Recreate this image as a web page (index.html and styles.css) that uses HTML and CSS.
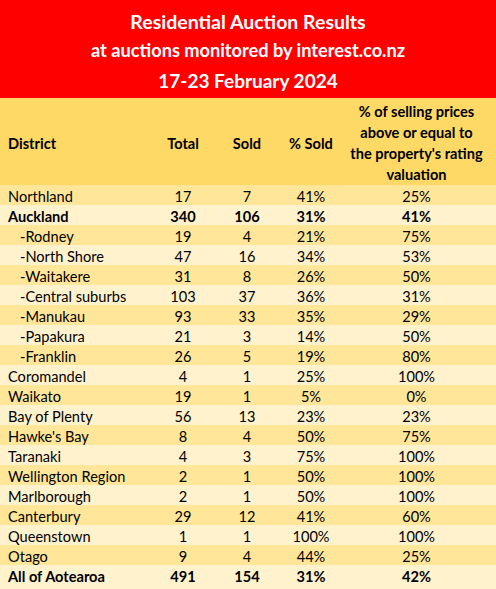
FILE: index.html
```html
<!DOCTYPE html>
<html>
<head>
<meta charset="utf-8">
<link rel="stylesheet" href="styles.css">
</head>
<body>
<div class="sheet">
  <header class="banner">
    <div class="title">Residential Auction Results</div>
    <div class="subtitle">at auctions monitored by interest.co.nz</div>
    <div class="date">17-23 February 2024</div>
  </header>
  <table class="results">
    <colgroup>
      <col class="c-district"><col class="c-num"><col class="c-num"><col class="c-num"><col class="c-val">
    </colgroup>
    <thead>
      <tr>
        <th class="left">District</th>
        <th>Total</th>
        <th>Sold</th>
        <th>% Sold</th>
        <th class="val"><span class="ln">% of selling prices</span><span class="ln">above or equal to</span><span class="ln">the property's rating</span><span class="ln">valuation</span></th>
      </tr>
    </thead>
    <tbody>
      <tr><td class="left">Northland</td><td>17</td><td>7</td><td>41%</td><td class="val">25%</td></tr>
      <tr class="bold"><td class="left">Auckland</td><td>340</td><td>106</td><td>31%</td><td class="val">41%</td></tr>
      <tr><td class="left sub">-Rodney</td><td>19</td><td>4</td><td>21%</td><td class="val">75%</td></tr>
      <tr><td class="left sub">-North Shore</td><td>47</td><td>16</td><td>34%</td><td class="val">53%</td></tr>
      <tr><td class="left sub">-Waitakere</td><td>31</td><td>8</td><td>26%</td><td class="val">50%</td></tr>
      <tr><td class="left sub">-Central suburbs</td><td>103</td><td>37</td><td>36%</td><td class="val">31%</td></tr>
      <tr><td class="left sub">-Manukau</td><td>93</td><td>33</td><td>35%</td><td class="val">29%</td></tr>
      <tr><td class="left sub">-Papakura</td><td>21</td><td>3</td><td>14%</td><td class="val">50%</td></tr>
      <tr><td class="left sub">-Franklin</td><td>26</td><td>5</td><td>19%</td><td class="val">80%</td></tr>
      <tr><td class="left">Coromandel</td><td>4</td><td>1</td><td>25%</td><td class="val">100%</td></tr>
      <tr><td class="left">Waikato</td><td>19</td><td>1</td><td>5%</td><td class="val">0%</td></tr>
      <tr><td class="left">Bay of Plenty</td><td>56</td><td>13</td><td>23%</td><td class="val">23%</td></tr>
      <tr><td class="left">Hawke's Bay</td><td>8</td><td>4</td><td>50%</td><td class="val">75%</td></tr>
      <tr><td class="left">Taranaki</td><td>4</td><td>3</td><td>75%</td><td class="val">100%</td></tr>
      <tr><td class="left">Wellington Region</td><td>2</td><td>1</td><td>50%</td><td class="val">100%</td></tr>
      <tr><td class="left">Marlborough</td><td>2</td><td>1</td><td>50%</td><td class="val">100%</td></tr>
      <tr><td class="left">Canterbury</td><td>29</td><td>12</td><td>41%</td><td class="val">60%</td></tr>
      <tr><td class="left">Queenstown</td><td>1</td><td>1</td><td>100%</td><td class="val">100%</td></tr>
      <tr><td class="left">Otago</td><td>9</td><td>4</td><td>44%</td><td class="val">25%</td></tr>
      <tr class="bold total"><td class="left">All of Aotearoa</td><td>491</td><td>154</td><td>31%</td><td class="val">42%</td></tr>
    </tbody>
  </table>
</div>
</body>
</html>
```

FILE: styles.css
```css
html, body {
  margin: 0;
  padding: 0;
  background: #FFF2CC;
}
body {
  font-family: Lato, "Open Sans", sans-serif;
  color: #000;
  width: 496px;
  height: 589px;
  overflow: hidden;
}
.sheet {
  display: flex;
  flex-direction: column;
}
.banner {
  background: #FF0000;
  color: #fff;
  font-weight: bold;
  text-align: center;
  height: 98px;
  box-sizing: border-box;
  padding-top: 10px;
}
.title {
  font-size: 19.5px;
  line-height: 24px;
}
.subtitle {
  font-size: 18.2px;
  line-height: 24px;
  margin-top: 4px;
}
.date {
  font-size: 19px;
  line-height: 24px;
  margin-top: 7px;
}
.results {
  border-collapse: collapse;
  table-layout: fixed;
  width: 496px;
  font-size: 14.6px;
}
.c-district { width: 151px; }
.c-num { width: 64px; }
.c-val { width: 153px; }
.results th, .results td {
  padding: 0;
  text-align: center;
  vertical-align: middle;
  box-sizing: border-box;
}
.results thead tr {
  background: #FFD966;
}
.results th {
  height: 86px;
  font-weight: bold;
  line-height: 21px;
  padding-top: 3px;
}
.results th .ln {
  display: block;
  white-space: nowrap;
}
.results th.val {
  padding-right: 6px;
}
.results td {
  height: 20px;
  line-height: 16px;
  padding-top: 4px;
  white-space: nowrap;
}
.results td.val {
  padding-right: 6px;
}
.results .left {
  text-align: left;
  padding-left: 8px;
}
.results .sub {
  padding-left: 20px;
}
.results tbody tr:nth-child(odd) { background: #FFE699; }
.results tbody tr:nth-child(even) { background: #FFF2CC; }
.results tr.bold td { font-weight: bold; }
```
